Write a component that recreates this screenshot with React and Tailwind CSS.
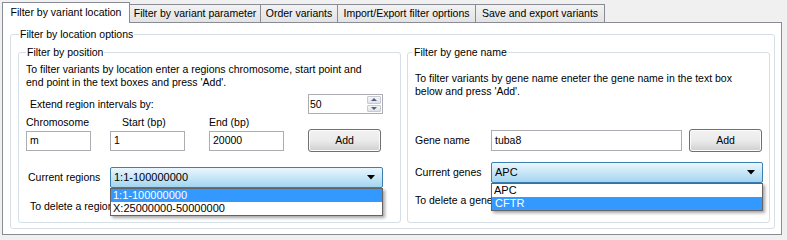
export default function App() {
  const tabInactive =
    "h-[18px] border border-b-0 border-[#898c95] bg-gradient-to-b from-[#f2f2f2] to-[#e3e3e3] flex items-center justify-center -ml-px";
  const input = "h-[20px] border border-[#abadb3] bg-white pl-[3px] flex items-center";
  const button =
    "h-[23px] w-[73px] border border-[#707070] rounded-[3px] bg-gradient-to-b from-[#f2f2f2] via-[#ebebeb] to-[#cfcfcf] flex items-center justify-center shadow-[inset_0_0_0_1px_#fcfcfc]";
  const combo =
    "h-[21px] border border-[#3c7fb1] rounded-[2px] bg-gradient-to-b from-[#eaf6fd] via-[#c7e6f7] to-[#a3d5f1] flex items-center pl-[3px] pr-[7px]";
  const arrow = (
    <svg width="8" height="5" viewBox="0 0 8 5" className="ml-auto">
      <path d="M0 0 H8 L4 4.5 Z" fill="#000" />
    </svg>
  );
  return (
    <div className="w-[787px] h-[240px] bg-[#f0f0f0] overflow-hidden text-[10.5px] leading-[13px] text-black font-['Liberation_Sans',Arial,sans-serif]">
      {/* tab strip */}
      <div className="flex items-end h-[22px] pl-[2px]">
        <div className="relative z-10 h-[21px] -mb-px w-[128px] border border-b-0 border-[#898c95] bg-white flex items-center justify-center pb-[2px]">
          Filter by variant location
        </div>
        <div className={tabInactive + " w-[132px]"}>Filter by variant parameter</div>
        <div className={tabInactive + " w-[78px]"}>Order variants</div>
        <div className={tabInactive + " w-[139px]"}>Import/Export filter oprtions</div>
        <div className={tabInactive + " w-[130px]"}>Save and export variants</div>
      </div>

      {/* panel */}
      <div className="ml-[2px] w-[780px] h-[213px] border border-[#898c95] bg-white pl-[7px] pt-[5px]">
        <fieldset className="w-[765px] h-[201px] border border-[#d5dfe5] rounded-[3px]">
          <legend className="ml-[8px] px-[1px]">Filter by location options</legend>
          <div className="flex pl-[7px] pt-[5px] gap-[6px]">
            {/* left group */}
            <fieldset className="w-[383px] h-[177px] border border-[#d5dfe5] rounded-[3px]">
              <legend className="ml-[7px] px-[1px]">Filter by position</legend>
              <div className="pl-[7px] pt-[4px]">
                <p>
                  To filter variants by location enter a regions chromosome, start point and
                  <br />
                  end point in the text boxes and press &apos;Add&apos;.
                </p>
                <div className="flex items-center mt-[5px]">
                  <span className="w-[282px] pl-[4px]">Extend region intervals by:</span>
                  <div className="w-[75px] h-[20px] border border-[#abadb3] bg-white flex items-center pl-[1px]">
                    <span>50</span>
                    <div className="ml-auto h-full w-[16px] flex flex-col p-[1px] gap-[1px]">
                      <div className="flex-1 border border-[#c7cbd1] rounded-[1px] bg-gradient-to-b from-[#f5f5f5] to-[#dfe3e8] flex items-center justify-center">
                        <svg width="6" height="3" viewBox="0 0 6 3"><path d="M0 3 L3 0 L6 3 Z" fill="#4d6185" /></svg>
                      </div>
                      <div className="flex-1 border border-[#c7cbd1] rounded-[1px] bg-gradient-to-b from-[#f5f5f5] to-[#dfe3e8] flex items-center justify-center">
                        <svg width="6" height="3" viewBox="0 0 6 3"><path d="M0 0 L6 0 L3 3 Z" fill="#4d6185" /></svg>
                      </div>
                    </div>
                  </div>
                </div>
                <div className="flex mt-[2px]">
                  <span className="w-[96px]">Chromosome</span>
                  <span className="w-[87px]">Start (bp)</span>
                  <span>End (bp)</span>
                </div>
                <div className="flex items-center mt-0">
                  <div className={input + " w-[65px]"}>m</div>
                  <div className={input + " w-[75px] ml-[19px]"}>1</div>
                  <div className={input + " w-[75px] ml-[24px]"}>20000</div>
                  <div className={button + " ml-[24px]"}>Add</div>
                </div>
                <div className="flex items-center mt-[15px]">
                  <span className="w-[84px] pl-[2px]">Current regions</span>
                  <div className="relative w-[273px]">
                    <div className={combo}>
                      <span className="text-[11px]">1:1-100000000</span>
                      {arrow}
                    </div>
                    <div className="absolute left-0 top-full w-[273px] bg-white border border-[#646464] shadow-[2px_2px_3px_rgba(0,0,0,0.35)] z-20 text-[11px] leading-[13px]">
                      <div className="bg-[#3399ff] text-white pl-[2px] h-[13px]">1:1-100000000</div>
                      <div className="pl-[2px] h-[13px]">X:25000000-50000000</div>
                    </div>
                  </div>
                </div>
                <div className="mt-[12px] pl-[4px]">To delete a region select it and press 'Delete'.</div>
              </div>
            </fieldset>

            {/* right group */}
            <fieldset className="w-[363px] h-[177px] border border-[#d5dfe5] rounded-[3px]">
              <legend className="ml-[5px] px-[1px]">Filter by gene name</legend>
              <div className="pl-[7px] pt-[13px]">
                <p>
                  To filter variants by gene name eneter the gene name in the text box
                  <br />
                  below and press &apos;Add&apos;.
                </p>
                <div className="flex items-center mt-[31px]">
                  <span className="w-[76px]">Gene name</span>
                  <div className={input + " w-[191px] h-[21px]"}>tuba8</div>
                  <div className={button + " ml-[7px]"}>Add</div>
                </div>
                <div className="flex items-center mt-[10px]">
                  <span className="w-[76px]">Current genes</span>
                  <div className="relative w-[272px]">
                    <div className={combo + " h-[20px]"}>
                      <span className="text-[11px]">APC</span>
                      {arrow}
                    </div>
                    <div className="absolute left-0 top-full w-[272px] bg-white border border-[#646464] shadow-[2px_2px_3px_rgba(0,0,0,0.35)] z-20 text-[11px] leading-[13px]">
                      <div className="pl-[2px] h-[13px]">APC</div>
                      <div className="bg-[#3399ff] text-white pl-[2px] h-[13px] border border-dotted border-[#d07a30] leading-[11px]">CFTR</div>
                    </div>
                  </div>
                </div>
                <div className="mt-[11px]">To delete a gene select it and press 'Delete'.</div>
              </div>
            </fieldset>
          </div>
        </fieldset>
      </div>
    </div>
  );
}
